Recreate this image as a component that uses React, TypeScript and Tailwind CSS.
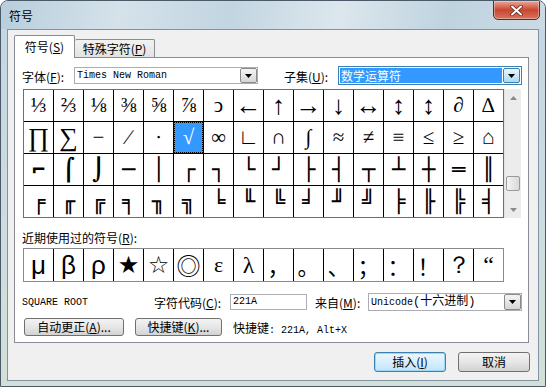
import React from 'react';

const cjk = "font-['Noto_Sans_CJK_SC',sans-serif]";
const mono = "font-['Liberation_Mono','Noto_Sans_CJK_SC',monospace]";

const rows: string[][] = [
  ['⅓', '⅔', '⅛', '⅜', '⅝', '⅞', 'ↄ', '←', '↑', '→', '↓', '↔', '↕', '↕', '∂', '∆'],
  ['∏', '∑', '−', '∕', '∙', '√', '∞', '∟', '∩', '∫', '≈', '≠', '≡', '≤', '≥', '⌂'],
  ['⌐', '⌠', '⌡', '─', '│', '┌', '┐', '└', '┘', '├', '┤', '┬', '┴', '┼', '═', '║'],
  ['╒', '╓', '╔', '╕', '╖', '╗', '╘', '╙', '╚', '╛', '╜', '╝', '╞', '╟', '╠', '╡'],
];

const big = new Set(['←', '↑', '→', '↓', '↔', '↕', '∏', '∑']);

const recent: { ch: string; cls: string }[] = [
  { ch: 'μ', cls: "font-['Liberation_Sans',sans-serif] text-[26px]" },
  { ch: 'β', cls: "font-['Liberation_Sans',sans-serif] text-[26px]" },
  { ch: 'ρ', cls: "font-['Liberation_Sans',sans-serif] text-[26px]" },
  { ch: '★', cls: "font-['DejaVu_Sans',sans-serif] text-[24px]" },
  { ch: '☆', cls: "font-['DejaVu_Sans',sans-serif] text-[24px]" },
  { ch: '◎', cls: "font-['Noto_Sans_CJK_SC',sans-serif] text-[24px]" },
  { ch: 'ε', cls: "font-['Liberation_Serif',serif] text-[22px]" },
  { ch: 'λ', cls: "font-['Liberation_Serif',serif] text-[24px]" },
  { ch: '，', cls: "font-['Noto_Sans_CJK_SC',sans-serif] text-[22px]" },
  { ch: '。', cls: "font-['Noto_Sans_CJK_SC',sans-serif] text-[22px]" },
  { ch: '、', cls: "font-['Noto_Sans_CJK_SC',sans-serif] text-[22px]" },
  { ch: '；', cls: "font-['Noto_Sans_CJK_SC',sans-serif] text-[22px]" },
  { ch: '：', cls: "font-['Noto_Sans_CJK_SC',sans-serif] text-[22px]" },
  { ch: '！', cls: "font-['Noto_Sans_CJK_SC',sans-serif] text-[22px]" },
  { ch: '？', cls: "font-['Liberation_Serif',serif] text-[24px]" },
  { ch: '“', cls: "font-['Liberation_Serif',serif] text-[24px]" },
];

const Hotkey = ({ text, k, tail = '' }: { text: string; k: string; tail?: string }) => (
  <span className={`${cjk} text-[12px] leading-[14px] text-black whitespace-nowrap`}>
    {text}(<span className="underline">{k}</span>){tail}
  </span>
);

const Arrow = ({ color = '#000' }: { color?: string }) => (
  <svg width="7" height="4" viewBox="0 0 7 4">
    <path d="M0 0h7L3.5 4z" fill={color} />
  </svg>
);

const DropButton = ({ active = false }: { active?: boolean }) => (
  <div
    className={`w-[17px] h-full shrink-0 flex items-center justify-center border rounded-[2px] ${
      active
        ? 'border-[#3c7fb1] bg-gradient-to-b from-[#eaf6fd] to-[#a7d9f5]'
        : 'border-[#8a8a8a] bg-gradient-to-b from-[#f4f4f4] to-[#d6d6d6]'
    }`}
  >
    <Arrow />
  </div>
);

export default function App() {
  return (
    <div className="w-[546px] h-[387px] overflow-hidden rounded-t-[8px] border border-[#4b5a68] bg-[linear-gradient(180deg,#c4d6e3_0%,#cddcdf_60%,#d3e0d7_100%)] relative select-none">
      {/* title bar */}
      <div className="h-[28px] relative bg-[linear-gradient(100deg,#b8cedc_0%,#d5e2ea_22%,#c2d5e1_42%,#dce7ed_62%,#bfd3df_82%,#cbdbe5_100%)]">
        <span className={`${cjk} absolute left-[8px] top-[8px] text-[12px] leading-[14px] text-black`}>符号</span>
        <div className="absolute right-[5px] top-[-1px] w-[47px] h-[20px] rounded-b-[5px] border border-[#5b2a22] bg-gradient-to-b from-[#e9a797] via-[#c9452f] to-[#d8735f] flex items-center justify-center shadow-[inset_0_0_0_1px_rgba(255,255,255,0.35)]">
          <svg width="13" height="11" viewBox="0 0 13 11">
            <path d="M2 1.5l9 8M11 1.5l-9 8" stroke="#5a231b" strokeWidth="3.4" strokeLinecap="round" />
            <path d="M2 1.5l9 8M11 1.5l-9 8" stroke="#ffffff" strokeWidth="2" strokeLinecap="round" />
          </svg>
        </div>
      </div>

      {/* client area */}
      <div className="ml-[6px] w-[532px] h-[352px] border border-[#7f93a3] bg-[#f0f0f0] flex flex-col">
        {/* tabs */}
        <div className="ml-[6px] mt-[5px] h-[22px] flex items-end relative z-10">
          <div className="w-[61px] h-[23px] -mb-px bg-white border border-b-0 border-[#898c95] rounded-t-[2px] flex items-center justify-center">
            <Hotkey text="符号" k="S" />
          </div>
          <div className="w-[80px] h-[18px] bg-gradient-to-b from-[#f2f2f2] to-[#e3e3e3] border border-l-0 border-b-0 border-[#898c95] rounded-t-[2px] flex items-center justify-center">
            <Hotkey text="特殊字符" k="P" />
          </div>
        </div>

        {/* tab pane */}
        <div className="ml-[6px] w-[515px] h-[286px] border border-[#898c95] bg-white flex flex-col">
          {/* font / subset */}
          <div className="mt-[9px] pl-[7px] h-[17px] flex items-center">
            <div className="w-[52px]"><Hotkey text="字体" k="F" tail=":" /></div>
            <div className="w-[184px] h-[17px] border border-[#abadb3] bg-white flex items-stretch">
              <div className={`${mono} flex-1 text-[10px] leading-[15px] pl-[2px] text-black`}>Times New Roman</div>
              <DropButton />
            </div>
            <div className="ml-[26px] w-[54px]"><Hotkey text="子集" k="U" tail=":" /></div>
            <div className="w-[184px] h-[19px] border border-[#3c7fb1] bg-white flex items-stretch p-px">
              <div className={`${cjk} flex-1 bg-[#3399ff] text-white text-[12px] leading-[15px] pl-[1px] mr-[1px]`}>数学运算符</div>
              <DropButton active />
            </div>
          </div>

          {/* symbol grid */}
          <div className="mt-[5px] pl-[8px] flex">
            <div className="grid grid-cols-[repeat(16,29px)] grid-rows-[repeat(4,31px)] gap-px bg-black border border-[#6e6e6e] w-[481px] h-[129px]">
              {rows.map((row, r) =>
                row.map((ch, c) => {
                  const sel = r === 1 && c === 5;
                  const boxy = r >= 2;
                  return (
                    <div
                      key={`${r}-${c}`}
                      className={`flex items-center justify-center overflow-hidden ${
                        sel ? 'bg-[#3399ff] text-white outline outline-1 outline-dotted outline-black -outline-offset-1' : 'bg-white text-black'
                      } ${
                        boxy
                          ? "font-['DejaVu_Sans_Mono',monospace] font-bold text-[22px]"
                          : big.has(ch)
                          ? "font-['Liberation_Serif','DejaVu_Serif',serif] text-[26px]"
                          : "font-['Liberation_Serif','DejaVu_Serif',serif] text-[21px]"
                      } leading-none`}
                    >
                      {ch}
                    </div>
                  );
                })
              )}
            </div>
            {/* scrollbar */}
            <div className="w-[17px] h-[129px] bg-[#ececec] border-l border-[#e2e2e2] flex flex-col">
              <div className="h-[17px] flex items-center justify-center">
                <svg width="7" height="4" viewBox="0 0 7 4"><path d="M0 4h7L3.5 0z" fill="#8a8a8a" /></svg>
              </div>
              <div className="mt-[70px] mx-px h-[15px] rounded-[2px] border border-[#9a9a9a] bg-gradient-to-r from-[#f4f4f4] to-[#d9d9d9]" />
              <div className="flex-1" />
              <div className="h-[17px] flex items-center justify-center">
                <Arrow color="#8a8a8a" />
              </div>
            </div>
          </div>

          {/* recently used */}
          <div className="mt-[13px] pl-[7px] h-[14px] flex items-center">
            <Hotkey text="近期使用过的符号" k="R" tail=":" />
          </div>
          <div className="mt-[3px] pl-[8px]">
            <div className="grid grid-cols-[repeat(16,29px)] h-[34px] w-[481px] gap-px bg-black border border-[#8a8a8a]">
              {recent.map((r, i) => (
                <div key={i} className={`bg-white flex items-center justify-center leading-none text-black ${r.cls}`}>
                  {r.ch}
                </div>
              ))}
            </div>
          </div>

          {/* info row */}
          <div className="mt-[11px] pl-[7px] h-[18px] flex items-center">
            <div className={`${mono} w-[132px] text-[10px] text-black`}>SQUARE ROOT</div>
            <div className="w-[76px]"><Hotkey text="字符代码" k="C" tail=":" /></div>
            <div className={`${mono} w-[77px] h-[16px] border border-[#abadb3] bg-white text-[10px] leading-[14px] pl-[2px] text-black`}>221A</div>
            <div className="ml-[8px] w-[53px]"><Hotkey text="来自" k="M" tail=":" /></div>
            <div className="w-[154px] h-[18px] border border-[#abadb3] bg-white flex items-stretch">
              <div className={`${mono} flex-1 text-[10px] leading-[16px] pl-[2px] text-black whitespace-nowrap`}>
                Unicode<span className="text-[12px]">(十六进制)</span>
              </div>
              <DropButton />
            </div>
          </div>

          {/* buttons row */}
          <div className="mt-[7px] pl-[9px] h-[18px] flex items-center">
            <button className="w-[100px] h-[18px] rounded-[3px] border border-[#707070] bg-gradient-to-b from-[#f3f3f3] via-[#e6e6e6] to-[#d2d2d2] flex items-center justify-center">
              <Hotkey text="自动更正" k="A" tail="..." />
            </button>
            <button className="ml-[11px] w-[87px] h-[18px] rounded-[3px] border border-[#707070] bg-gradient-to-b from-[#f3f3f3] via-[#e6e6e6] to-[#d2d2d2] flex items-center justify-center">
              <Hotkey text="快捷键" k="K" tail="..." />
            </button>
            <div className="ml-[11px] whitespace-nowrap text-black">
              <span className={`${cjk} text-[12px]`}>快捷键</span>
              <span className={`${mono} text-[10px]`}>: 221A, Alt+X</span>
            </div>
          </div>
        </div>

        {/* dialog buttons */}
        <div className="mt-[9px] pr-[8px] flex justify-end">
          <button className="w-[72px] h-[20px] rounded-[3px] border border-[#3c7fb1] bg-gradient-to-b from-[#eaf6fd] via-[#d9effc] to-[#bee6fd] shadow-[inset_0_0_0_1px_#9fd5f5] flex items-center justify-center">
            <Hotkey text="插入" k="I" />
          </button>
          <button className="ml-[12px] w-[72px] h-[20px] rounded-[3px] border border-[#707070] bg-gradient-to-b from-[#f3f3f3] via-[#e6e6e6] to-[#d2d2d2] flex items-center justify-center">
            <span className={`${cjk} text-[12px] leading-[14px] text-black`}>取消</span>
          </button>
        </div>
      </div>
    </div>
  );
}
